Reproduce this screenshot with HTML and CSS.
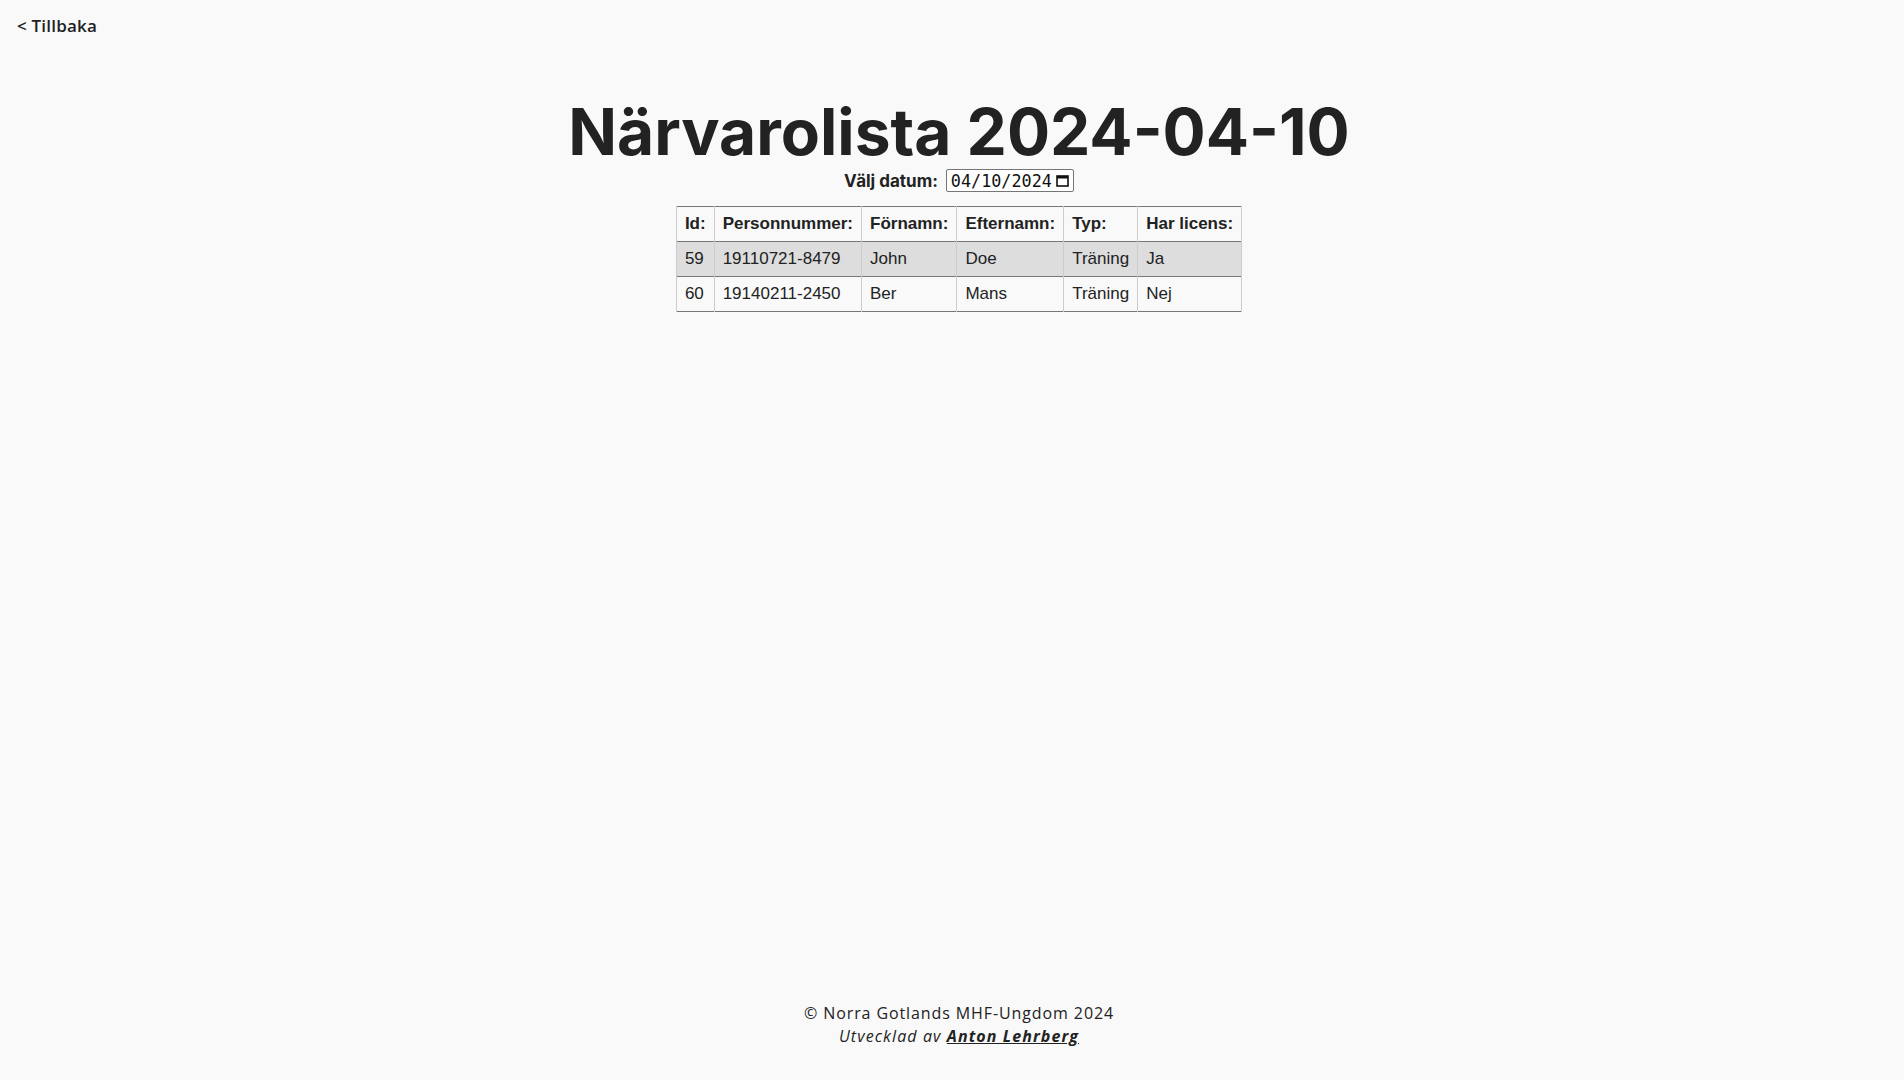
FILE: index.html
```html
<!DOCTYPE html>
<html lang="sv">
<head>
<meta charset="utf-8">
<title>Närvarolista</title>
<link rel="stylesheet" href="styles.css">
</head>
<body>
<div class="page">
  <nav class="topnav"><a class="back" href="#">&lt; Tillbaka</a></nav>
  <main class="content">
    <h1 class="title">Närvarolista 2024-04-10</h1>
    <div class="datepick">
      <label class="datelabel" for="d">Välj datum:</label>
      <span class="dateinput" id="d">04/10/2024<svg class="cal" width="13" height="13" viewBox="0 0 13 13"><rect x="1" y="2" width="11" height="10" fill="none" stroke="#111" stroke-width="1.6"/><rect x="1" y="2" width="11" height="2.5" fill="#111"/></svg></span>
    </div>
    <table class="grid">
      <thead>
        <tr><th>Id:</th><th>Personnummer:</th><th>Förnamn:</th><th>Efternamn:</th><th>Typ:</th><th>Har licens:</th></tr>
      </thead>
      <tbody>
        <tr class="odd"><td>59</td><td>19110721-8479</td><td>John</td><td>Doe</td><td>Träning</td><td>Ja</td></tr>
        <tr><td>60</td><td>19140211-2450</td><td>Ber</td><td>Mans</td><td>Träning</td><td>Nej</td></tr>
      </tbody>
    </table>
  </main>
  <footer class="foot">
    <p class="copy">© Norra Gotlands MHF-Ungdom 2024</p>
    <p class="dev"><em>Utvecklad av <a href="#">Anton Lehrberg</a></em></p>
  </footer>
</div>
</body>
</html>
```
FILE: styles.css
```css
html, body {
  margin: 0;
  padding: 0;
  background: #f9f9f9;
  color: #222;
  font-family: "Open Sans", "Noto Sans", sans-serif;
}
.page {
  min-height: 100vh;
  display: flex;
  flex-direction: column;
}
.topnav {
  padding: 14px 17px 0;
  height: 31px;
}
.back {
  color: #222;
  text-decoration: none;
  font-size: 17px;
  font-weight: 600;
  letter-spacing: 0.2px;
}
.content {
  flex: 1;
  display: flex;
  flex-direction: column;
  align-items: center;
  padding-left: 14px;
}
.title {
  margin: 48px 0 0;
  font-family: "Inter", sans-serif;
  font-weight: 700;
  font-size: 64px;
  line-height: 78px;
}
.datepick {
  display: flex;
  align-items: center;
  gap: 8px;
  margin-top: -2px;
}
.datelabel {
  font-family: "Inter", sans-serif;
  font-weight: 700;
  font-size: 17px;
}
.dateinput {
  display: inline-flex;
  align-items: center;
  gap: 2px;
  border: 1px solid #767676;
  border-radius: 2px;
  background: #fff;
  padding: 0 4px;
  height: 23px;
  box-sizing: border-box;
  font-family: "DejaVu Sans Mono", monospace;
  font-size: 16.8px;
  color: #111;
}
.cal { margin-left: 2px; }
.grid {
  margin-top: 14px;
  border-collapse: collapse;
  font-family: "Liberation Sans", Arial, sans-serif;
  font-size: 17px;
  color: #222;
  border-top: 1px solid #777;
  border-bottom: 1px solid #777;
}
.grid th, .grid td {
  padding: 8px;
  text-align: left;
  border-left: 1px solid #ccc;
  border-right: 1px solid #ccc;
  line-height: 18px;
}
.grid th { font-weight: 700; }
.grid thead tr { border-bottom: 1px solid #777; }
.grid tbody tr { border-bottom: 1px solid #777; }
.grid tr.odd { background: #ddd; }
.foot {
  text-align: center;
  padding-bottom: 32px;
  padding-left: 14px;
  font-size: 16px;
  letter-spacing: 0.9px;
}
.foot p { margin: 0; line-height: 23px; }
.dev { letter-spacing: 1.1px; }
.dev a { color: #222; font-weight: 700; }
```
